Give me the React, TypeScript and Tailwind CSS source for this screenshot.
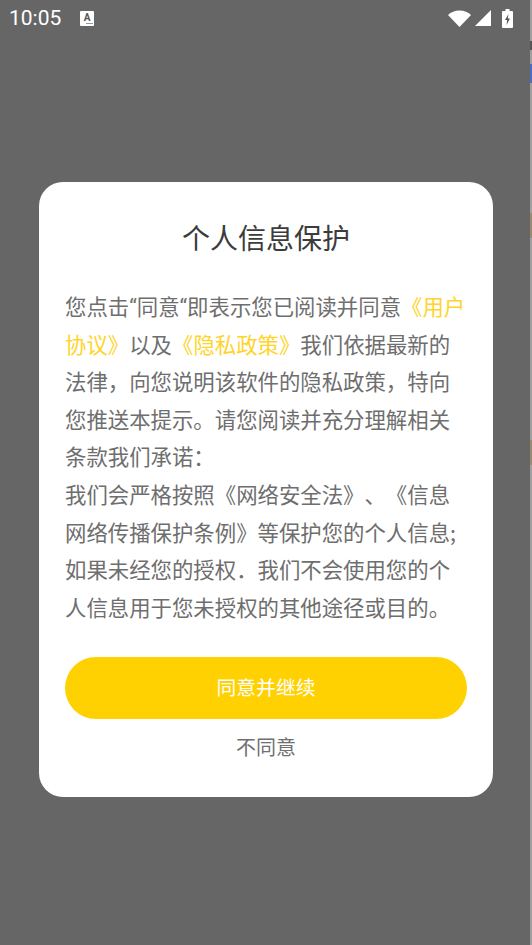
import React from 'react';

const lines: { text: string; link?: boolean; latin?: boolean }[][] = [
  [{ text: '您点击' }, { text: '“', latin: true }, { text: '同意' }, { text: '“', latin: true }, { text: '即表示您已阅读并同意' }, { text: '《用户', link: true }],
  [{ text: '协议》', link: true }, { text: '以及' }, { text: '《隐私政策》', link: true }, { text: '我们依据最新的' }],
  [{ text: '法律，向您说明该软件的隐私政策，特向' }],
  [{ text: '您推送本提示。请您阅读并充分理解相关' }],
  [{ text: '条款我们承诺：' }],
  [{ text: '我们会严格按照《网络安全法》、《信息' }],
  [{ text: '网络传播保护条例》等保护您的个人信息;' }],
  [{ text: '如果未经您的授权．我们不会使用您的个' }],
  [{ text: '人信息用于您未授权的其他途径或目的。' }],
];

function StatusBar() {
  return (
    <div className="flex h-[36px] items-center pl-[9px] pr-[17px] text-white">
      <span className="text-[21px] leading-none font-['Roboto',sans-serif]">10:05</span>
      <svg className="ml-[19px]" width="14" height="15" viewBox="0 0 14 15">
        <rect x="0" y="0" width="14" height="15" rx="1" fill="#fff" />
        <text x="7" y="10" textAnchor="middle" fontSize="10" fontWeight="700" fill="#555" fontFamily="Roboto, sans-serif">A</text>
        <rect x="6" y="12" width="7" height="1" fill="#999" />
      </svg>
      <div className="ml-auto flex items-center">
        <svg width="23" height="17" viewBox="0 0 23 17">
          <path d="M0 5C3 2 7 0.500 11.500 0.500S20 2 23 5L11.500 17z" fill="#fff" />
        </svg>
        <svg className="ml-[4px]" width="16" height="16" viewBox="0 0 16 16">
          <path d="M16 0V16H0z" fill="#fff" />
        </svg>
        <svg className="ml-[11px]" width="11" height="19" viewBox="0 0 11 19">
          <path d="M3.500 0h4v2H10a1 1 0 0 1 1 1v15a1 1 0 0 1-1 1H1a1 1 0 0 1-1-1V3a1 1 0 0 1 1-1h2.500z" fill="#fff" />
          <path d="M6.500 5L3 11h2.200L4.500 16 8 9.500H5.800z" fill="#555" />
        </svg>
      </div>
    </div>
  );
}

// sliver of the page behind the dimmed overlay, along the right edge
function EdgeStrip() {
  return (
    <div className="flex w-[2px] flex-col bg-[#a0a0a0]">
      <div className="h-[41px]" />
      <div className="h-[9px] bg-[#555555]" />
      <div className="h-[14px]" />
      <div className="h-[19px] bg-[#4a6fc0]" />
      <div className="h-[130px]" />
      <div className="h-[25px] bg-[#9a8a70]" />
      <div className="h-[202px]" />
      <div className="h-[25px] bg-[#9a8a70]" />
    </div>
  );
}

export default function App() {
  return (
    <div className="flex h-[945px] w-[532px] overflow-hidden bg-[#666666] font-['Noto_Sans_CJK_SC',sans-serif]">
      <div className="flex w-[530px] flex-col">
        <StatusBar />
        <div className="ml-[39px] mt-[146px] w-[454px] rounded-[24px] bg-white pb-[36px] pl-[26px] pr-[26px] pt-[33px]">
          <h1 className="text-center text-[28px] font-normal leading-[44px] text-[#3c3c3c]">个人信息保护</h1>
          <div className="mt-[28px] whitespace-nowrap text-[21.4px] leading-[37.6px] text-[#6e6e6e] [text-spacing-trim:space-all]">
            {lines.map((line, i) => (
              <div key={i} className="h-[37.6px]">
                {line.map((part, j) => (
                  <span
                    key={j}
                    className={part.link ? 'text-[#ffd428]' : part.latin ? "font-['Roboto',sans-serif]" : undefined}
                  >
                    {part.text}
                  </span>
                ))}
              </div>
            ))}
          </div>
          <button className="mt-[32px] flex h-[62px] w-[402px] items-center justify-center rounded-full bg-[#ffd100] pb-[3px] text-[19.8px] text-white">
            同意并继续
          </button>
          <div className="mt-[14px] text-center text-[20px] leading-[28px] text-[#707070]">不同意</div>
        </div>
      </div>
      <EdgeStrip />
    </div>
  );
}
